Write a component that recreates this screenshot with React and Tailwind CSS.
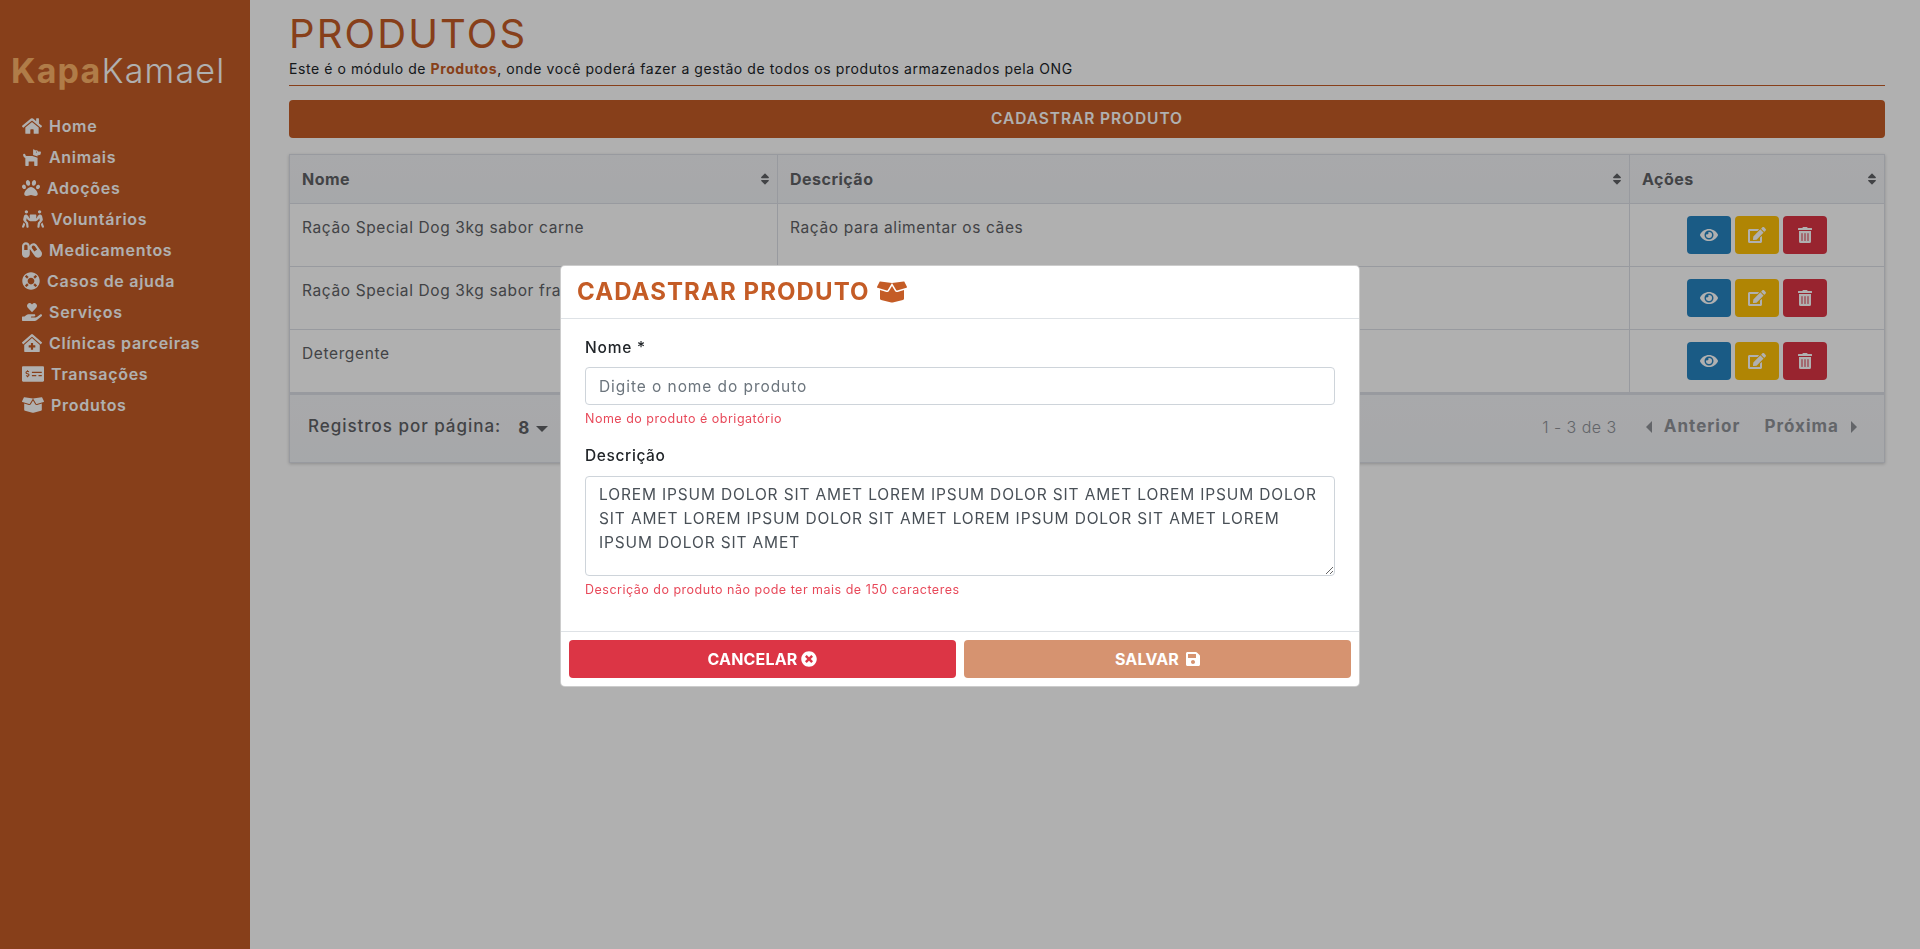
import React from 'react';
import {
  FaHome, FaDog, FaPaw, FaPeopleCarry, FaCapsules, FaLifeRing, FaHandHoldingHeart,
  FaClinicMedical, FaMoneyCheckAlt, FaBoxOpen, FaEye, FaEdit, FaTrashAlt, FaTimesCircle,
  FaSave, FaSort,
} from 'react-icons/fa';

const menu = [
  { label: 'Home', icon: <FaHome className="w-[20px] h-[18px]" /> },
  { label: 'Animais', icon: <FaDog className="w-[20px] h-[18px]" /> },
  { label: 'Adoções', icon: <FaPaw className="w-[18px] h-[18px]" /> },
  { label: 'Voluntários', icon: <FaPeopleCarry className="w-[22px] h-[18px]" /> },
  { label: 'Medicamentos', icon: <FaCapsules className="w-[20px] h-[18px]" /> },
  { label: 'Casos de ajuda', icon: <FaLifeRing className="w-[18px] h-[18px]" /> },
  { label: 'Serviços', icon: <FaHandHoldingHeart className="w-[20px] h-[18px]" /> },
  { label: 'Clínicas parceiras', icon: <FaClinicMedical className="w-[20px] h-[18px]" /> },
  { label: 'Transações', icon: <FaMoneyCheckAlt className="w-[22px] h-[18px]" /> },
  { label: 'Produtos', icon: <FaBoxOpen className="w-[22px] h-[18px]" /> },
];

const rows = [
  { nome: 'Ração Special Dog 3kg sabor carne', descricao: 'Ração para alimentar os cães' },
  { nome: 'Ração Special Dog 3kg sabor frango', descricao: 'Ração para alimentar os cães' },
  { nome: 'Detergente', descricao: 'Detergente para limpeza' },
];

const Sidebar = () => (
  <aside className="w-[250px] shrink-0 bg-[#c45c26] pt-[49px] pl-[11px]">
    <div className="text-[34px] leading-[44px] tracking-[0.035em] text-white font-light">
      <span className="font-bold text-[#ffb469]">Kapa</span>Kamael
    </div>
    <nav className="mt-[17px] pl-[11px]">
      {menu.map((item) => (
        <div key={item.label} className="flex items-center h-[31px] text-white font-semibold text-[16px] tracking-[0.045em]">
          {item.icon}
          <span className="ml-[7px]">{item.label}</span>
        </div>
      ))}
    </nav>
  </aside>
);

const Th = ({ children }) => (
  <th className="relative h-[49px] border border-[#dcdfe6] px-[12px] text-left font-bold text-[16px] tracking-[0.03em] text-[#606266]">
    {children}
    <FaSort className="absolute right-[6px] top-[17px] w-[12px] h-[14px] text-[#606266]" />
  </th>
);

const ActionButton = ({ color, children }) => (
  <button className={`flex items-center justify-center w-[44px] h-[38px] rounded-[4px] text-white ${color}`}>
    {children}
  </button>
);

const Table = () => (
  <div className="mt-[16px] shadow-[0_1px_3px_rgba(0,0,0,0.2)]">
    <table className="w-full table-fixed border-collapse">
      <colgroup>
        <col className="w-[488px]" />
        <col />
        <col className="w-[255px]" />
      </colgroup>
      <thead>
        <tr className="bg-linear-to-b from-[#f4f5f8] to-[#f1f3f6]">
          <Th>Nome</Th>
          <Th>Descrição</Th>
          <Th>Ações</Th>
        </tr>
      </thead>
      <tbody>
        {rows.map((row) => (
          <tr key={row.nome} className="h-[63px]">
            <td className="border border-[#dcdfe6] px-[12px] pt-[12px] align-top text-[15.5px] leading-[24px] tracking-[0.04em] text-[#606266]">{row.nome}</td>
            <td className="border border-[#dcdfe6] px-[12px] pt-[12px] align-top text-[15.5px] leading-[24px] tracking-[0.04em] text-[#606266]">{row.descricao}</td>
            <td className="border border-[#dcdfe6] align-middle">
              <div className="flex justify-center gap-[4px]">
                <ActionButton color="bg-[#2784c1]"><FaEye className="w-[18px] h-[16px]" /></ActionButton>
                <ActionButton color="bg-[#ffc107]"><FaEdit className="w-[18px] h-[16px]" /></ActionButton>
                <ActionButton color="bg-[#dc3545]"><FaTrashAlt className="w-[14px] h-[16px]" /></ActionButton>
              </div>
            </td>
          </tr>
        ))}
      </tbody>
    </table>
    <div className="flex items-center justify-between h-[70px] border border-t-2 border-[#dcdfe6] bg-linear-to-b from-[#f4f5f8] to-[#f1f3f6] pl-[18px] pr-[27px] pb-[4px] text-[#606266]">
      <div className="flex items-center font-medium text-[17px] tracking-[0.057em]">
        <span>Registros por página:</span>
        <span className="ml-[17px] mt-[4px] font-bold">8</span>
        <span className="ml-[6px] mt-[5px] w-0 h-0 border-x-[6px] border-t-[6px] border-x-transparent border-t-[#606266]"></span>
      </div>
      <div className="flex items-center text-[#909399]">
        <span className="font-light text-[16px] tracking-[0.03em]">1 - 3 de 3</span>
        <span className="ml-[29px] w-0 h-0 border-y-[6px] border-r-[6px] border-y-transparent border-r-[#909399]"></span>
        <span className="ml-[12px] font-bold text-[17px] tracking-[0.06em]">Anterior</span>
        <span className="ml-[24px] font-bold text-[17px] tracking-[0.06em]">Próxima</span>
        <span className="ml-[12px] w-0 h-0 border-y-[6px] border-l-[6px] border-y-transparent border-l-[#909399]"></span>
      </div>
    </div>
  </div>
);

const Modal = () => (
  <div className="fixed inset-0 bg-[rgba(0,0,0,0.31)] flex justify-center items-start pt-[265px]">
    <div className="w-[800px] rounded-[5px] border border-[rgba(0,0,0,0.2)] bg-white">
      <div className="flex items-center h-[53px] border-b border-[#dee2e6] pl-[16px]">
        <h5 className="font-bold text-[24px] tracking-[0.045em] text-[#c45c26]">CADASTRAR PRODUTO</h5>
        <FaBoxOpen className="ml-[7px] w-[30px] h-[24px] text-[#c45c26]" />
      </div>
      <div className="px-[24px] pt-[17px] h-[312px] text-[#212529]">
        <label className="block font-medium text-[15.5px] leading-[24px] tracking-[0.05em]">Nome *</label>
        <input
          className="block mt-[7px] w-full h-[38px] rounded-[4px] border border-[#ced4da] px-[13px] text-[15.5px] tracking-[0.06em] placeholder:text-[#6c757d] outline-none"
          placeholder="Digite o nome do produto"
        />
        <p className="mt-[4px] text-[12.5px] leading-[19px] tracking-[0.04em] text-[#e8495a]">Nome do produto é obrigatório</p>
        <label className="block mt-[16px] font-medium text-[15.5px] leading-[24px] tracking-[0.04em]">Descrição</label>
        <textarea
          readOnly
          rows={4}
          className="block mt-[8px] w-full h-[100px] rounded-[4px] border border-[#ced4da] px-[13px] py-[6px] text-[15.5px] leading-[24px] tracking-[0.055em] text-[#495057] outline-none"
          value="LOREM IPSUM DOLOR SIT AMET LOREM IPSUM DOLOR SIT AMET LOREM IPSUM DOLOR SIT AMET LOREM IPSUM DOLOR SIT AMET LOREM IPSUM DOLOR SIT AMET LOREM IPSUM DOLOR SIT AMET"
        />
        <p className="mt-[4px] text-[12.5px] leading-[19px] tracking-[0.04em] text-[#e8495a]">Descrição do produto não pode ter mais de 150 caracteres</p>
      </div>
      <div className="flex gap-[8px] border-t border-[#dee2e6] p-[8px]">
        <button className="flex flex-1 items-center justify-center gap-[4px] h-[38px] rounded-[4px] bg-[#dc3545] font-bold text-[16px] tracking-[0.01em] text-white">
          CANCELAR <FaTimesCircle className="w-[16px] h-[16px]" />
        </button>
        <button className="flex flex-1 items-center justify-center gap-[7px] h-[38px] rounded-[4px] bg-[#d69370] font-bold text-[16px] tracking-[0.01em] text-white">
          SALVAR <FaSave className="w-[14px] h-[16px]" />
        </button>
      </div>
    </div>
  </div>
);

export default function App() {
  return (
    <div className="flex h-screen bg-white [font-family:Inter,sans-serif] overflow-hidden">
      <Sidebar />
      <main className="flex-1 pl-[39px] pr-[35px] pt-[11px]">
        <h1 className="font-normal text-[40px] leading-[46px] tracking-[0.053em] text-[#c45c26]">PRODUTOS</h1>
        <p className="mt-[2px] text-[14px] leading-[20px] tracking-[0.041em] text-[#212529]">
          Este é o módulo de <strong className="font-bold text-[#c45c26]">Produtos</strong>, onde você poderá fazer a gestão de todos os produtos armazenados pela ONG
        </p>
        <hr className="mt-[6px] border-t border-[#c45c26]" />
        <button className="mt-[14px] w-full h-[38px] rounded-[4px] bg-[#c45c26] font-semibold text-[15.5px] tracking-[0.06em] text-white">
          CADASTRAR PRODUTO
        </button>
        <Table />
      </main>
      <Modal />
    </div>
  );
}
